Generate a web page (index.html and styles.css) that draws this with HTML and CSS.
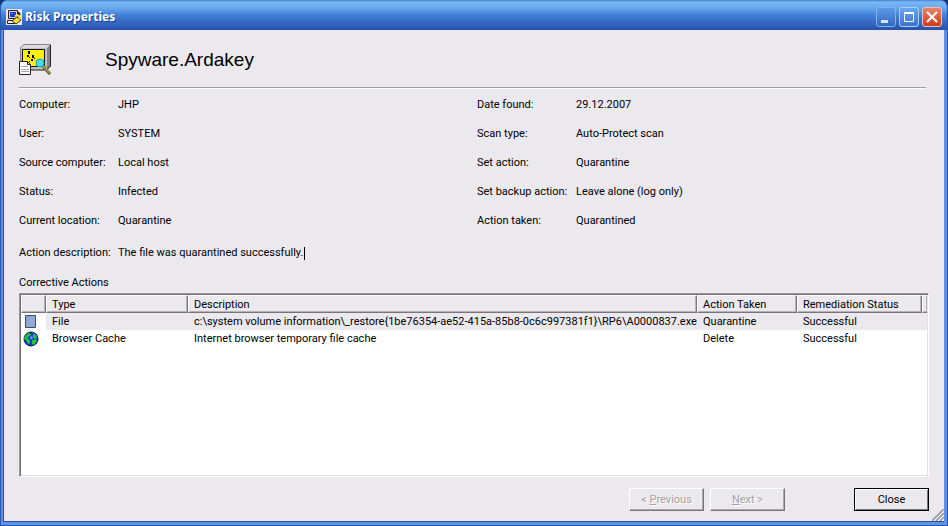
FILE: index.html
```html
<!DOCTYPE html>
<html lang="en">
<head>
    <meta charset="UTF-8">
    <meta name="viewport" content="width=device-width, initial-scale=1.0">
    <title>Risk Properties</title>
    <link rel="stylesheet" href="styles.css">
</head>
<body>
    <div class="window">
        <header class="titlebar">
            <svg class="app-icon" width="16" height="16" viewBox="0 0 16 16">
                <rect width="16" height="16" fill="#e8e6ea"/>
                <path d="M2.500 1.500h9v8h-9z" fill="#d8d8de" stroke="#222"/>
                <path d="M4 3h6v5H4z" fill="#1c3cb8"/>
                <path d="M5 4h2v1H5z" fill="#6f9cf0"/>
                <path d="M1.500 11.500h6l2 3h-8z" fill="#f4f4f4" stroke="#222"/>
                <path d="M6 12l5-4 4 3-5 4z" fill="#f5e62c" stroke="#443c08"/>
                <path d="M9 7l3-1 3 4" fill="none" stroke="#f5e62c" stroke-width="2"/>
                <path d="M12 3l2 3" stroke="#222" stroke-width="2"/>
            </svg>
            <h1>Risk Properties</h1>
            <div class="window-controls">
                <button type="button" class="control" aria-label="Minimize">
                    <svg width="18" height="18" viewBox="0 0 18 18"><path d="M4 12h7v3H4z" fill="#d4e6ff"/></svg>
                </button>
                <button type="button" class="control maximize" aria-label="Maximize">
                    <svg width="18" height="18" viewBox="0 0 18 18"><path d="M4.500 4.500h9v9h-9z" fill="none" stroke="#fff"/><path d="M4 4h10v2H4z" fill="#fff"/></svg>
                </button>
                <button type="button" class="control close" aria-label="Close window">
                    <svg width="18" height="18" viewBox="0 0 18 18"><path d="M4 4l10 10M14 4L4 14" stroke="#fff" stroke-width="2"/></svg>
                </button>
            </div>
        </header>

        <main class="content">
            <div class="heading">
                <svg width="33" height="33" viewBox="0 0 33 33">
                    <path d="M1 5l4-4h27v22l-4 4H1z" fill="#c0c0c2"/>
                    <path d="M1 5l4-4h27l-4 4z" fill="#dcdcde"/>
                    <path d="M28 5l4-4v22l-4 4z" fill="#848487"/>
                    <path d="M1.500 20V4.500L5 1.500h27" fill="none" stroke="#848487"/>
                    <path d="M31.500 2v21l-4 4H12" fill="none" stroke="#222"/>
                    <path d="M3.500 6.500h22v17h-22z" fill="#fff200" stroke="#111"/>
                    <path d="M9 8h2v3H9zM8 12h2v2H8zM10 14h1v1h-1zM13 12h2v3h-2zM12 16h2v2h-2zM15 15h1v1h-1zM10 18h1v1h-1z" fill="#000"/>
                    <path d="M.5 18.500h8l3 3v10H.5z" fill="#fff" stroke="#222"/>
                    <path d="M8.500 18.500v3h3" fill="none" stroke="#222"/>
                    <path d="M2 23.500h7M2 26.500h8M2 28.500h8" stroke="#a4a4aa"/>
                    <path d="M24 23l7 8" stroke="#4c4a24" stroke-width="3"/>
                    <path d="M24 23l7 7" stroke="#a79a49" stroke-width="2"/>
                    <circle cx="21" cy="20" r="4" fill="#3fe0ec" stroke="#219bb0"/>
                </svg>
                <h2>Spyware.Ardakey</h2>
            </div>

            <div class="details">
                <dl>
                    <div><dt>Computer:</dt><dd>JHP</dd></div>
                    <div><dt>User:</dt><dd>SYSTEM</dd></div>
                    <div><dt>Source computer:</dt><dd>Local host</dd></div>
                    <div><dt>Status:</dt><dd>Infected</dd></div>
                    <div><dt>Current location:</dt><dd>Quarantine</dd></div>
                </dl>
                <dl>
                    <div><dt>Date found:</dt><dd>29.12.2007</dd></div>
                    <div><dt>Scan type:</dt><dd>Auto-Protect scan</dd></div>
                    <div><dt>Set action:</dt><dd>Quarantine</dd></div>
                    <div><dt>Set backup action:</dt><dd>Leave alone (log only)</dd></div>
                    <div><dt>Action taken:</dt><dd>Quarantined</dd></div>
                </dl>
                <dl>
                    <div><dt>Action description:</dt><dd>The file was quarantined successfully.<span class="caret"></span></dd></div>
                </dl>
            </div>

            <h3 id="actionsTitle">Corrective Actions</h3>
            <div class="list">
                <table aria-labelledby="actionsTitle">
                    <colgroup>
                        <col class="col-icon">
                        <col class="col-type">
                        <col>
                        <col class="col-action">
                        <col class="col-status">
                        <col class="col-end">
                    </colgroup>
                    <thead>
                        <tr>
                            <th></th>
                            <th>Type</th>
                            <th>Description</th>
                            <th>Action Taken</th>
                            <th>Remediation Status</th>
                            <th></th>
                        </tr>
                    </thead>
                    <tbody>
                        <tr class="selected">
                            <td>
                                <svg width="16" height="16" viewBox="0 0 16 16">
                                    <path d="M2.500 1.500h10v12h-10z" fill="#8ba4d2" stroke="#3c4c70"/>
                                    <path d="M4 10l6-7M4 13l8-9M7 13l5-6" stroke="#a3b6dc"/>
                                </svg>
                            </td>
                            <td>File</td>
                            <td>c:\system volume information\_restore{1be76354-ae52-415a-85b8-0c6c997381f1}\RP6\A0000837.exe</td>
                            <td>Quarantine</td>
                            <td>Successful</td>
                            <td></td>
                        </tr>
                        <tr>
                            <td>
                                <svg width="16" height="16" viewBox="0 0 16 16">
                                    <circle cx="8" cy="8" r="7" fill="#1537c4" stroke="#0c1c50"/>
                                    <path d="M2 5l3-3 3 1-1 2-2 1v2l2 1v3l-2 1-2-4-2-1z" fill="#22c43c"/>
                                    <path d="M10 2l3 2 1 3-2 1-2-2zM9 9l4-1 1 2-3 4-2-1z" fill="#22c43c"/>
                                    <path d="M8 5l2 1-1 2H7z" fill="#58b8f0"/>
                                </svg>
                            </td>
                            <td>Browser Cache</td>
                            <td>Internet browser temporary file cache</td>
                            <td>Delete</td>
                            <td>Successful</td>
                            <td></td>
                        </tr>
                    </tbody>
                </table>
            </div>

            <div class="buttons">
                <button type="button" class="btn" disabled>&lt; <u>P</u>revious</button>
                <button type="button" class="btn" disabled><u>N</u>ext &gt;</button>
                <button type="button" class="btn btn-close">Close</button>
            </div>
        </main>

        <svg class="grip" width="12" height="12" viewBox="0 0 12 12">
            <path d="M0 12L12 0M4 12l8-8M8 12l4-4" stroke="#a3a1a8" stroke-width="2"/>
            <path d="M2 12L12 2M6 12l6-6M10 12l2-2" stroke="#fff"/>
        </svg>
    </div>
</body>
</html>
```

FILE: styles.css
```css
* {
    box-sizing: border-box;
}
body {
    margin: 0;
    background-color: #16357c;
    color: #000;
    font-family: Roboto, Tahoma, sans-serif;
    font-size: 11px;
    line-height: 15px;
}
h1, h2, h3, dl, dd {
    margin: 0;
    font-weight: normal;
}
svg {
    display: block;
}
.window {
    position: relative;
    display: flex;
    flex-direction: column;
    min-height: 100vh;
    border: solid #2a55b0;
    border-width: 0 1px 1px;
    border-radius: 8px 8px 0 0;
    background-color: #5f92e4;
    overflow: hidden;
}

/* title bar */
.titlebar {
    display: flex;
    align-items: center;
    height: 30px;
    padding: 3px 5px 0;
    background: linear-gradient(#4380d4 0, #7ab8f4 2px, #68a8ee 8px, #4686da 14px, #3970c8 20px, #2f5fba 26px, #2850aa 30px);
}
.titlebar h1 {
    flex: 1;
    margin-left: 3px;
    color: #fff;
    font: bold 12px/16px "Noto Sans", "Trebuchet MS", sans-serif;
    text-shadow: 1px 1px #1c3f8c;
}
.window-controls {
    display: flex;
    gap: 3px;
}
.control {
    width: 20px;
    height: 20px;
    padding: 0;
    border: 1px solid #7fb4f0;
    border-radius: 3px;
    background: linear-gradient(#5e9ae4, #3467be);
}
.control.maximize {
    border-color: #a8d0fa;
    background: linear-gradient(#6aa8ee, #3a74cc);
}
.control.close {
    border-color: #f0c0bc;
    background: linear-gradient(#e88468, #cc3c1c);
}

/* dialog body */
.content {
    display: flex;
    flex: 1;
    flex-direction: column;
    margin: 0 3px 3px 2px;
    padding: 13px 15px 10px;
    border: solid #2450a8;
    border-width: 0 0 1px 1px;
    background-color: #ebe9ed;
}
.heading {
    display: flex;
    align-items: center;
    height: 45px;
    margin-right: 3px;
    padding-bottom: 11px;
    border-bottom: 1px solid #a09fa5;
    box-shadow: 0 1px #fff;
}
.heading h2 {
    margin-left: 53px;
    font: 19px/22px "Liberation Sans", Arial, sans-serif;
}
.details {
    display: grid;
    grid-template-columns: 1fr 1fr;
    gap: 17px 6px;
    padding: 9px 0 15px;
}
.details dl {
    display: flex;
    flex-direction: column;
    gap: 14px;
}
.details dl div {
    display: flex;
}
.details dt {
    width: 99px;
}
.details dd {
    white-space: nowrap;
}
.caret {
    display: inline-block;
    width: 1px;
    height: 13px;
    margin-left: 1px;
    background-color: #000;
    vertical-align: middle;
}
h3 {
    font-size: 11px;
}

/* corrective actions list */
.list {
    flex: 1;
    margin-top: 3px;
    border: 1px solid;
    border-color: #9c9a9f #fff #fff #9c9a9f;
    background-color: #fff;
    box-shadow: inset 1px 1px #716f74, inset -1px -1px #e3e1e6;
    padding: 1px;
}
table {
    width: 100%;
    border-collapse: separate;
    border-spacing: 0;
    table-layout: fixed;
}
.col-icon {
    width: 25px;
}
.col-type {
    width: 142px;
}
.col-action {
    width: 100px;
}
.col-status {
    width: 125px;
}
.col-end {
    width: 5px;
}
th, td {
    height: 17px;
    padding: 0 0 0 6px;
    font-weight: normal;
    text-align: left;
    white-space: nowrap;
}
th {
    height: 18px;
    border: 1px solid;
    border-color: #fff #77757a #77757a #fff;
    background-color: #ebe9ed;
    box-shadow: inset -1px -1px #b5b3b8;
    padding-left: 5px;
}
th:first-child, td:first-child {
    padding-left: 2px;
}
th:last-child, td:last-child {
    padding-left: 0;
}
th:last-child {
    border-right: 0;
}
.selected td {
    background-color: #ebe9ed;
}
.selected td:first-child {
    background-color: #fff;
}

/* buttons */
.buttons {
    display: flex;
    justify-content: flex-end;
    gap: 6px;
    margin-top: 11px;
}
.btn {
    width: 75px;
    height: 23px;
    padding: 0;
    border: 1px solid;
    border-color: #fff #77757a #77757a #fff;
    background-color: #ebe9ed;
    box-shadow: inset -1px -1px #aaa8ae;
    color: #000;
    font: inherit;
}
.btn:disabled {
    color: #a3a1a6;
    text-shadow: 1px 1px #fff;
}
.btn-close {
    margin-left: 63px;
    border-color: #000;
    box-shadow: inset 1px 1px #fff, inset -1px -1px #77757a;
}
.grip {
    position: absolute;
    right: 3px;
    bottom: 4px;
}
```
